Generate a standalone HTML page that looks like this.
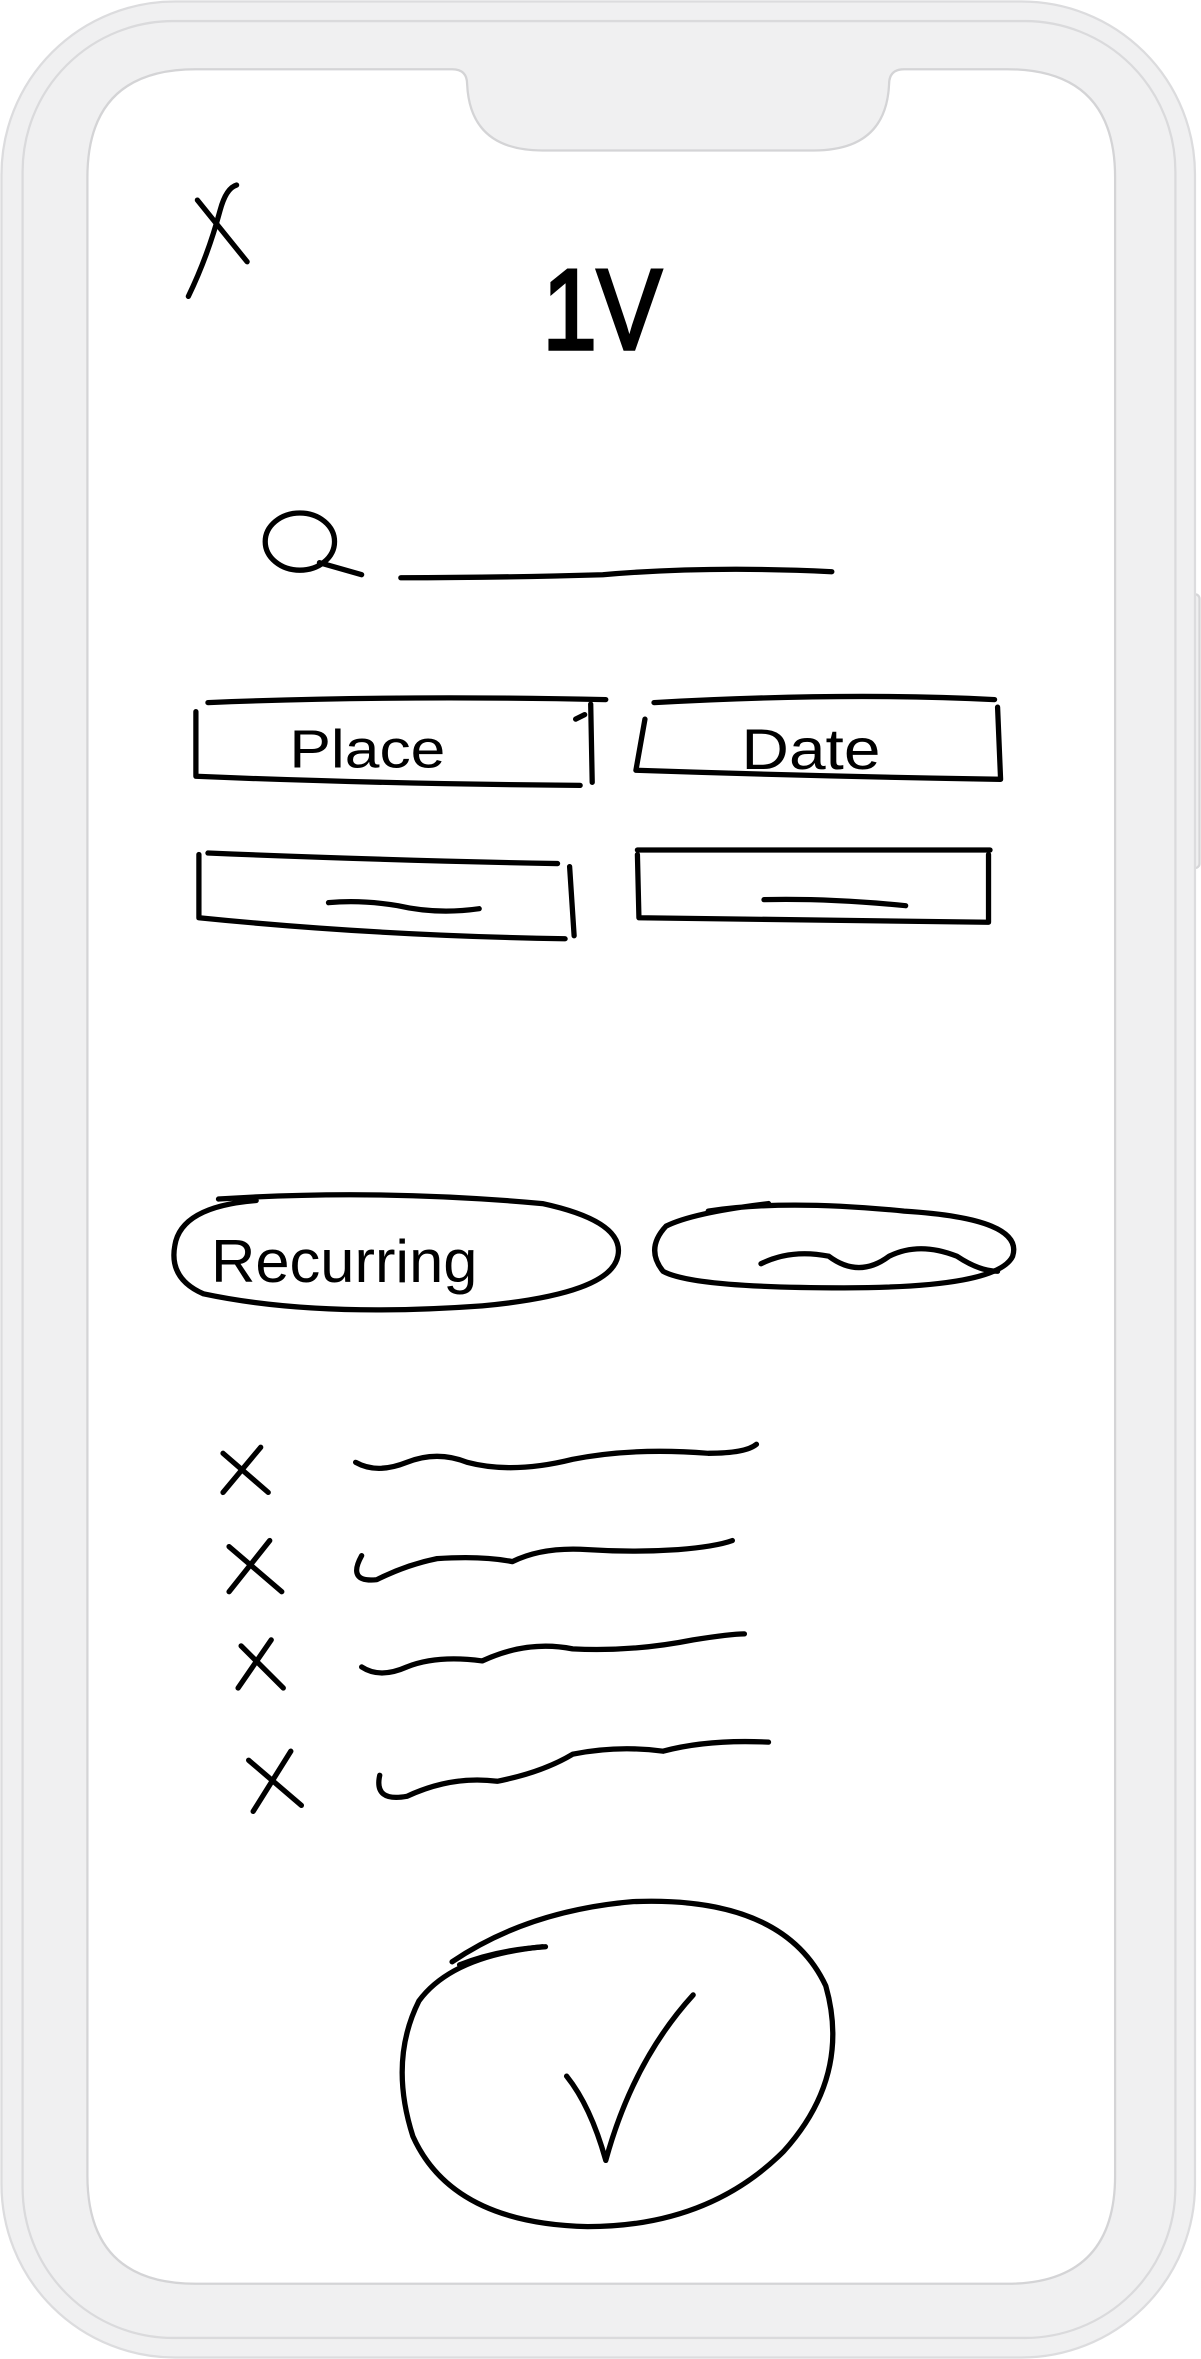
<!DOCTYPE html>
<html><head><meta charset="utf-8"><style>
html,body{margin:0;padding:0;background:#fff;width:1201px;height:2359px;overflow:hidden}
svg{display:block}
text{font-family:"Liberation Sans",sans-serif;fill:#000}
</style></head><body>
<svg width="1201" height="2359" viewBox="0 0 797 1568" preserveAspectRatio="none">
<rect x="2" y="178" width="12" height="64" rx="3" fill="#f0f0f1" stroke="#d6d6d8" stroke-width="1.5"/>
<rect x="2" y="288" width="12" height="118" rx="3" fill="#f0f0f1" stroke="#d6d6d8" stroke-width="1.5"/>
<rect x="2" y="430" width="12" height="118" rx="3" fill="#f0f0f1" stroke="#d6d6d8" stroke-width="1.5"/>
<rect x="783" y="395" width="13" height="182" rx="3" fill="#f0f0f1" stroke="#d6d6d8" stroke-width="1.5"/>
<rect x="1" y="1" width="792" height="1566" rx="115" fill="#f0f0f1" stroke="#dcdcde" stroke-width="1.5"/>
<rect x="15" y="14" width="765" height="1540" rx="100" fill="none" stroke="#dadadc" stroke-width="1.5"/>
<path d="M130 46 H300 Q310 46 310 56 Q312 100 360 100 H 540 Q588 100 590 56 Q590 46 600 46 H668 Q740 46 740 118 V1446 Q740 1518 668 1518 H130 Q58 1518 58 1446 V118 Q58 46 130 46 Z" fill="#fff" stroke="#d4d4d6" stroke-width="1.5"/>
<g fill="none" stroke="#000" stroke-width="3.5" stroke-linecap="round" stroke-linejoin="round">
<path d="M131 133 L164 174"/><path d="M157 123 Q150 125 146 140 Q138 170 125 197"/>
<ellipse cx="199" cy="360" rx="23" ry="19"/><path d="M212 374 L240 382"/>
<path d="M266 384 Q330 384 400 382 Q470 376 552 380"/>
<path d="M138 467 Q260 462 402 465"/><path d="M130 473 L130 516 Q250 521 385 522"/><path d="M392 468 L393 520"/><path d="M388 475 L382 478"/>
<path d="M434 467 Q560 460 660 465"/><path d="M428 478 L422 512 Q540 516 664 518 L662 470"/>
<path d="M138 567 Q260 572 370 574"/><path d="M132 568 L132 610 Q250 622 375 624"/><path d="M378 576 L381 622"/>
<path d="M218 600 Q240 598 264 602 Q290 608 318 604"/>
<path d="M423 565 Q540 565 657 565"/><path d="M423 568 L424 610 Q540 612 656 613 L656 568"/>
<path d="M507 598 Q550 597 601 602"/>
<path d="M145 797 Q250 790 360 800 Q415 812 410 835 Q405 860 320 868 Q210 876 135 860 Q112 850 116 828 Q120 802 170 798"/>
<path d="M470 805 Q520 797 600 805 Q680 810 672 835 Q662 856 560 856 Q460 856 440 845 Q428 830 442 815 Q460 806 510 800"/>
<path d="M505 840 Q525 830 550 835 Q570 850 590 835 Q610 825 635 835 Q650 845 662 845"/>
<path d="M148 966 L178 992"/><path d="M173 962 L148 992"/>
<path d="M236 972 Q250 980 270 972 Q290 964 310 972 Q340 980 380 970 Q420 962 470 966 Q495 966 502 960"/>
<path d="M152 1028 L187 1058"/><path d="M179 1024 L152 1058"/>
<path d="M240 1034 Q230 1052 250 1050 Q270 1040 290 1036 Q320 1034 340 1038 Q360 1028 390 1030 Q420 1032 450 1030 Q475 1028 486 1024"/>
<path d="M160 1094 L188 1122"/><path d="M180 1090 L158 1122"/>
<path d="M240 1108 Q252 1116 270 1108 Q290 1100 320 1104 Q350 1090 380 1096 Q420 1098 460 1090 Q485 1086 494 1086"/>
<path d="M165 1170 L200 1200"/><path d="M193 1164 L168 1204"/>
<path d="M252 1180 Q248 1198 270 1194 Q300 1180 330 1184 Q360 1178 380 1166 Q410 1160 440 1164 Q470 1156 510 1158"/>
<path d="M300 1304 Q350 1270 420 1264 Q520 1260 548 1320 Q565 1380 520 1430 Q470 1480 390 1480 Q300 1478 274 1420 Q258 1370 278 1330 Q300 1300 360 1294"/>
<path d="M305 1306 Q330 1296 362 1294"/>
<path d="M376 1380 Q392 1400 402 1436 Q420 1370 460 1326"/>
</g>
<text x="360" y="232" font-size="72" fill="none" stroke="#000" stroke-width="2.2" transform="translate(360 232) scale(0.9 1.05) translate(-360 -232)">1V</text>
<text x="192" y="510" font-size="36" transform="translate(192 510) scale(1.15 1) translate(-192 -510)">Place</text>
<text x="492" y="511" font-size="38" transform="translate(492 511) scale(1.15 1) translate(-492 -511)">Date</text>
<text x="140" y="852" font-size="40" transform="translate(140 852) scale(1.02 1) translate(-140 -852)">Recurring</text>
</svg>
</body></html>
